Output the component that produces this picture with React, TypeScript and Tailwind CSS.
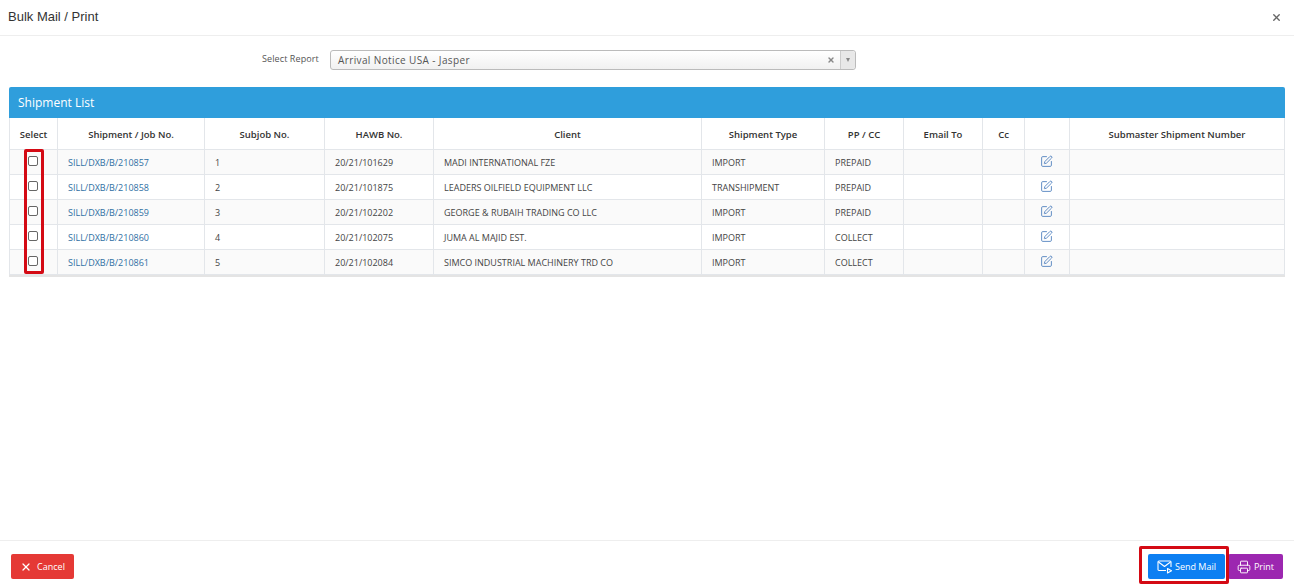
import { Printer, SquarePen, X } from "lucide-react";

const rows = [
  ["SILL/DXB/B/210857", "1", "20/21/101629", "MADI INTERNATIONAL FZE", "IMPORT", "PREPAID"],
  ["SILL/DXB/B/210858", "2", "20/21/101875", "LEADERS OILFIELD EQUIPMENT LLC", "TRANSHIPMENT", "PREPAID"],
  ["SILL/DXB/B/210859", "3", "20/21/102202", "GEORGE & RUBAIH TRADING CO LLC", "IMPORT", "PREPAID"],
  ["SILL/DXB/B/210860", "4", "20/21/102075", "JUMA AL MAJID EST.", "IMPORT", "COLLECT"],
  ["SILL/DXB/B/210861", "5", "20/21/102084", "SIMCO INDUSTRIAL MACHINERY TRD CO", "IMPORT", "COLLECT"],
];

const headers = [
  ["Select", "w-[48px]"],
  ["Shipment / Job No.", "w-[147px]"],
  ["Subjob No.", "w-[120px]"],
  ["HAWB No.", "w-[109px]"],
  ["Client", "w-[268px]"],
  ["Shipment Type", "w-[123px]"],
  ["PP / CC", "w-[79px]"],
  ["Email To", "w-[79px]"],
  ["Cc", "w-[42px]"],
  ["", "w-[45px]"],
  ["Submaster Shipment Number", ""],
];

function MailSend() {
  return (
    <svg width="16" height="14" viewBox="0 0 16 14" fill="none" stroke="currentColor" strokeWidth="1.1" strokeLinejoin="round">
      <path d="M9 10.5H2a1 1 0 0 1-1-1V2a1 1 0 0 1 1-1h11a1 1 0 0 1 1 1v5" />
      <path d="M1.5 2l6 4.5 6-4.5" />
      <path d="M10.5 8.5v4.5l4-2.25z" />
    </svg>
  );
}

export default function App() {
  return (
    <div className="relative h-[586px] w-full bg-white font-['Open_Sans',sans-serif] text-[#444]">
      <div className="flex h-[36px] items-center justify-between border-b border-[#eee] pb-[1px] pl-2 pr-[12px]">
        <h1 className="font-['Liberation_Sans',sans-serif] text-[13px] text-[#333]">Bulk Mail / Print</h1>
        <X size={11} strokeWidth={3} className="text-[#666]" />
      </div>

      <div className="mt-[14px] flex h-[20px] items-center pl-[262px]">
        <span className="w-[68px] pb-[3px] text-[9px] tracking-[0.1px] text-[#555]">Select Report</span>
        <div className="flex h-[20px] w-[526px] items-center rounded-[3px] border border-[#bbb] bg-gradient-to-b from-white to-[#f1f1f1] pl-[7px]">
          <span className="flex-1 text-[10px] tracking-[0.38px] text-[#555]">Arrival Notice USA - Jasper</span>
          <X size={8} strokeWidth={4} className="mr-[5px] text-[#888]" />
          <div className="flex h-full w-[15px] items-center justify-center rounded-r-[3px] border-l border-[#ccc] bg-[#e8e8e8]">
            <span className="h-0 w-0 border-x-[2.5px] border-t-[4px] border-x-transparent border-t-[#888]" />
          </div>
        </div>
      </div>

      <section className="mx-[9px] mt-[17px] w-[1276px] border-b-2 border-[#e4e4e4]">
        <div className="flex h-[31px] items-center rounded-t-[2px] bg-[#2f9edc] pl-[9px] pt-[1px] text-[12px] text-white">Shipment List</div>
        <table className="w-full table-fixed border-collapse text-[9px]">
          <thead>
            <tr className="h-[31px]">
              {headers.map(([h, w], i) => (
                <th key={i} className={`${w} border border-t-0 border-[#e3e6ea] pt-[3px] text-center text-[9.5px] font-semibold text-[#333]`}>{h}</th>
              ))}
            </tr>
          </thead>
          <tbody>
            {rows.map((r, i) => (
              <tr key={r[0]} className={`h-[25px] ${i % 2 === 0 ? "bg-[#fafafa]" : "bg-white"}`}>
                <td className="border border-[#e3e6ea]">
                  <span className="mb-[1px] ml-[18px] block h-[10px] w-[10px] rounded-[2px] border border-[#666] bg-white" />
                </td>
                <td className="border border-[#e3e6ea] pl-[10px] pt-[2px] text-[#2f6fa3]">{r[0]}</td>
                <td className="border border-[#e3e6ea] pl-[10px] pt-[2px]">{r[1]}</td>
                <td className="border border-[#e3e6ea] pl-[10px] pt-[2px]">{r[2]}</td>
                <td className="border border-[#e3e6ea] pl-[10px] pt-[2px]">{r[3]}</td>
                <td className="border border-[#e3e6ea] pl-[10px] pt-[2px]">{r[4]}</td>
                <td className="border border-[#e3e6ea] pl-[10px] pt-[2px]">{r[5]}</td>
                <td className="border border-[#e3e6ea]" />
                <td className="border border-[#e3e6ea]" />
                <td className="border border-[#e3e6ea] pr-[2px] text-center text-[#3f74b8]">
                  <SquarePen size={13} strokeWidth={1.5} className="mx-auto mb-[1px]" />
                </td>
                <td className="border border-[#e3e6ea]" />
              </tr>
            ))}
          </tbody>
        </table>
      </section>

      <footer className="absolute bottom-0 left-0 right-0 flex h-[46px] items-start justify-between border-t border-[#eee] px-[11px] pt-[13px] text-[9px] text-white">
        <button className="flex h-[25px] w-[63px] items-center justify-center gap-[5px] rounded-[2px] bg-[#e53935]">
          <X size={12} strokeWidth={2.5} />
          Cancel
        </button>
        <div className="flex gap-[3px]">
          <button className="flex h-[25px] w-[77px] items-center justify-center gap-[2px] rounded-[2px] bg-[#0d7ff2]">
            <MailSend />
            Send Mail
          </button>
          <button className="flex h-[25px] w-[55px] items-center justify-center gap-[3px] rounded-[2px] bg-[#9c27b0]">
            <Printer size={14} strokeWidth={1.6} />
            Print
          </button>
        </div>
      </footer>

      <div className="absolute left-[24px] top-[149px] h-[125px] w-[20px] rounded-[2px] border-[3px] border-[#d40a14]" />
      <div className="absolute left-[1139px] top-[546px] h-[38px] w-[90px] rounded-[2px] border-[3px] border-[#d40a14]" />
    </div>
  );
}
